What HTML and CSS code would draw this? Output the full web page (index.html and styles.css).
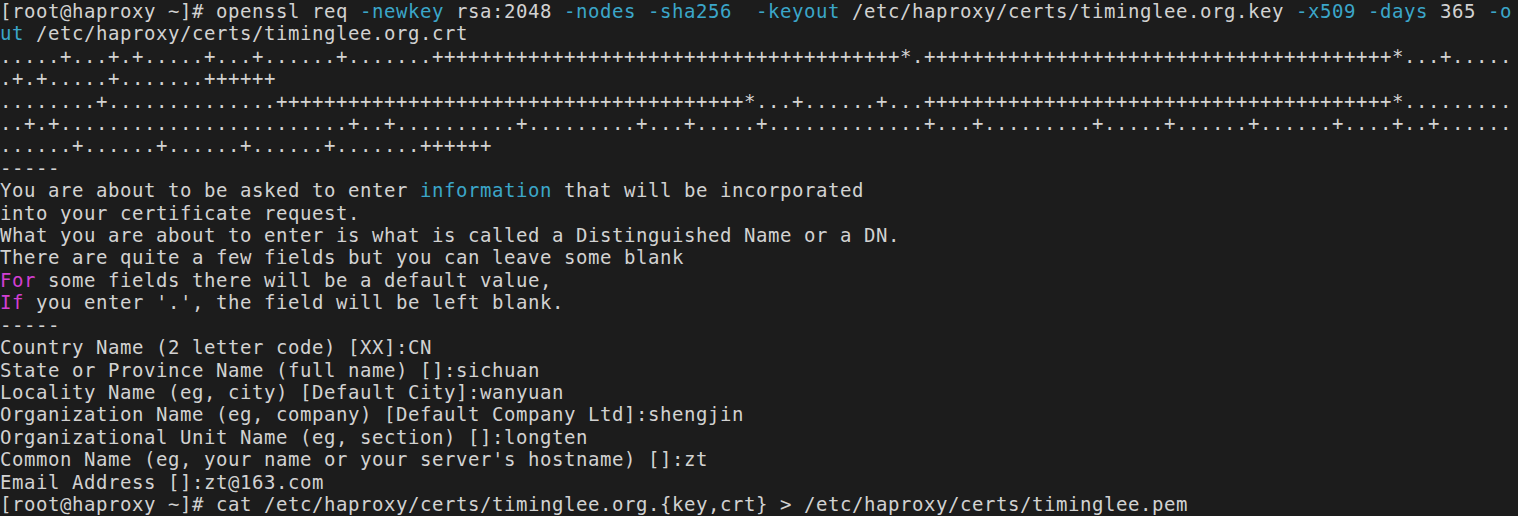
FILE: index.html
```html
<!DOCTYPE html>
<html lang="en">
<head>
<meta charset="utf-8">
<title>Terminal</title>
<link rel="stylesheet" href="styles.css">
</head>
<body>
<main class="term"><pre class="screen">[root@haproxy ~]# openssl req <span class="opt">-newkey</span> rsa:2048 <span class="opt">-nodes</span> <span class="opt">-sha256</span>  <span class="opt">-keyout</span> /etc/haproxy/certs/timinglee.org.key <span class="opt">-x509</span> <span class="opt">-days</span> 365 <span class="opt">-o</span>
<span class="opt">ut</span> /etc/haproxy/certs/timinglee.org.crt
.....+...+.+.....+...+......+.......+++++++++++++++++++++++++++++++++++++++*.+++++++++++++++++++++++++++++++++++++++*...+.....
.+.+.....+.......++++++
........+..............+++++++++++++++++++++++++++++++++++++++*...+......+...+++++++++++++++++++++++++++++++++++++++*.........
..+.+........................+..+..........+.........+...+.....+.............+...+.........+.....+......+......+....+..+......
......+......+......+......+.......++++++
-----
You are about to be asked to enter <span class="opt">information</span> that will be incorporated
into your certificate request.
What you are about to enter is what is called a Distinguished Name or a DN.
There are quite a few fields but you can leave some blank
<span class="kw">For</span> some fields there will be a default value,
<span class="kw">If</span> you enter '.', the field will be left blank.
-----
Country Name (2 letter code) [XX]:CN
State or Province Name (full name) []:sichuan
Locality Name (eg, city) [Default City]:wanyuan
Organization Name (eg, company) [Default Company Ltd]:shengjin
Organizational Unit Name (eg, section) []:longten
Common Name (eg, your name or your server's hostname) []:zt
Email Address []:zt@163.com
[root@haproxy ~]# cat /etc/haproxy/certs/timinglee.org.{key,crt} &gt; /etc/haproxy/certs/timinglee.pem</pre></main>
</body>
</html>
```

FILE: styles.css
```css
html, body {
  margin: 0;
  padding: 0;
  background: #1c1c1c;
}

.term {
  width: 1518px;
  height: 516px;
  overflow: hidden;
  background: #1c1c1c;
}

.screen {
  margin: 0;
  padding: 0 0 0 0;
  font-family: "DejaVu Sans Mono", monospace;
  font-size: 19px;
  letter-spacing: 0.561px;
  line-height: 22.4px;
  color: #d2d2d2;
  white-space: pre;
}

.opt {
  color: #3ba6c9;
}

.kw {
  color: #d23fd2;
}
```
